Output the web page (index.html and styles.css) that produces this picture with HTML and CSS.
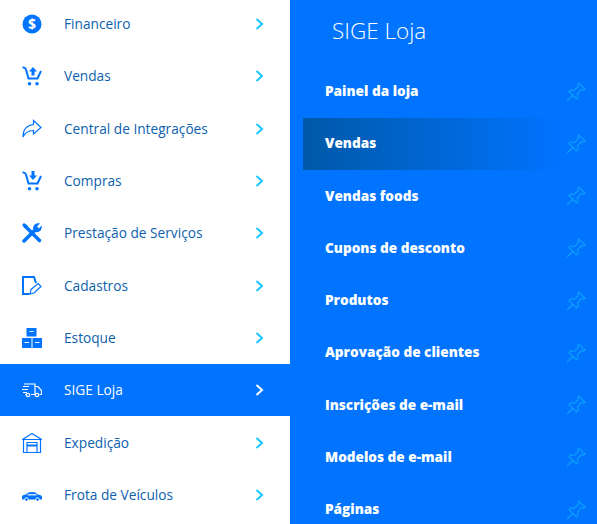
FILE: index.html
```html
<!DOCTYPE html>
<html lang="pt-BR">
<head>
  <meta charset="UTF-8" />
  <title>SIGE Loja</title>
  <link rel="stylesheet" href="styles.css">
</head>
<body>
  <div class="layout">
    <!-- main menu -->
    <ul class="menu">
      <li class="menu-item">
        <svg class="menu-icon" viewBox="0 0 20 20"><circle cx="10" cy="10" r="9.5" fill="currentColor"/><text x="10" y="15" class="dollar">$</text></svg>
        <span class="menu-label">Financeiro</span>
        <svg class="chevron" viewBox="0 0 9 12"><path d="M1.5 1l5.500 5-5.500 5"/></svg>
      </li>
      <li class="menu-item">
        <svg class="menu-icon" viewBox="0 0 20 20"><path class="line" d="M0.500 1.500c2.500-.5 3 .5 3.500 2l2.500 9h9l3.500-7.500"/><path class="solid" d="M11 1l4 4.500h-2.500v4h-3v-4h-2.500z"/><circle class="solid" cx="7.500" cy="17.800" r="1.800"/><circle class="solid" cx="15" cy="17.800" r="1.800"/></svg>
        <span class="menu-label">Vendas</span>
        <svg class="chevron" viewBox="0 0 9 12"><path d="M1.5 1l5.500 5-5.500 5"/></svg>
      </li>
      <li class="menu-item">
        <svg class="menu-icon" viewBox="0 0 20 20"><path class="thin" d="M11.500 1.500l7.500 7-7.500 6.500v-3.500c-4.500 0-8 1-10.500 6.500 0-6.500 3-11.500 10.500-12.500z"/></svg>
        <span class="menu-label">Central de Integrações</span>
        <svg class="chevron" viewBox="0 0 9 12"><path d="M1.5 1l5.500 5-5.500 5"/></svg>
      </li>
      <li class="menu-item">
        <svg class="menu-icon" viewBox="0 0 20 20"><path class="line" d="M0.500 1.500c2.500-.5 3 .5 3.500 2l2.500 9h9l3.500-7.500"/><path class="solid" d="M9.500 0h3v4.500h2.500l-4 4.500-4-4.500h2.500z"/><circle class="solid" cx="7.500" cy="17.800" r="1.800"/><circle class="solid" cx="15" cy="17.800" r="1.800"/></svg>
        <span class="menu-label">Compras</span>
        <svg class="chevron" viewBox="0 0 9 12"><path d="M1.5 1l5.500 5-5.500 5"/></svg>
      </li>
      <li class="menu-item">
        <svg class="menu-icon" viewBox="0 0 20 20"><path class="tool" d="M3 3l14.500 14.500"/><path class="solid" d="M0 2l2-2 4 3v2.500l-1 1z"/><path class="tool" d="M2 18l10-10"/><path class="solid" d="M11 6c0-4 3-6.500 7-5.500l-3 3 2 2 2.500-3c1 4-2 7.500-6 6.500z"/></svg>
        <span class="menu-label">Prestação de Serviços</span>
        <svg class="chevron" viewBox="0 0 9 12"><path d="M1.5 1l5.500 5-5.500 5"/></svg>
      </li>
      <li class="menu-item">
        <svg class="menu-icon" viewBox="0 0 20 20"><path class="line" d="M7.500 18h-6.500v-17h11l2 6"/><path class="thin" d="M9 13.500l7-6 3 3-7 6.500-4 1z"/></svg>
        <span class="menu-label">Cadastros</span>
        <svg class="chevron" viewBox="0 0 9 12"><path d="M1.5 1l5.500 5-5.500 5"/></svg>
      </li>
      <li class="menu-item">
        <svg class="menu-icon" viewBox="0 0 20 20"><path class="solid" d="M4.500 0h10v8.500h-10zM0 10h9.500v10h-9.500zM10.500 10h9.500v10h-9.500z"/><path class="gap" d="M7.500 3.500h4M2.500 14.500h4.500M13 14.500h4.500"/></svg>
        <span class="menu-label">Estoque</span>
        <svg class="chevron" viewBox="0 0 9 12"><path d="M1.5 1l5.500 5-5.500 5"/></svg>
      </li>
      <li class="menu-item active">
        <svg class="menu-icon" viewBox="0 0 20 20"><path class="thin" d="M2 4h11v10.500h-4M13 6.500h3l3.500 4v4h-2M4 14.500h-1M1 6.500h6M0 9.500h6M1 12.500h4"/><circle class="thin" cx="6" cy="15" r="1.700"/><circle class="thin" cx="15" cy="15" r="1.700"/></svg>
        <span class="menu-label">SIGE Loja</span>
        <svg class="chevron" viewBox="0 0 9 12"><path d="M1.5 1l5.500 5-5.500 5"/></svg>
      </li>
      <li class="menu-item">
        <svg class="menu-icon" viewBox="0 0 20 20"><path class="thin" d="M0.500 6.500l9.500-6 9.500 6zM1.500 6.500v13h17v-13"/><path class="thin" d="M5 9.500h10v10h-10z"/><path class="line" d="M5 12.500h10"/></svg>
        <span class="menu-label">Expedição</span>
        <svg class="chevron" viewBox="0 0 9 12"><path d="M1.5 1l5.500 5-5.500 5"/></svg>
      </li>
      <li class="menu-item">
        <svg class="menu-icon" viewBox="0 0 20 20"><path class="solid" d="M0 12c0-1.500 1.500-2.200 4-2.500 1.500-1.800 3.500-2.500 6-2.500s4 .7 5.500 2.500c2.500.2 4.500 1 4.500 2.500v2.500h-20z"/><path class="gap" d="M5.500 9.800h9"/><circle class="wheel" cx="4.500" cy="14.500" r="1.800"/><circle class="wheel" cx="15.500" cy="14.500" r="1.800"/></svg>
        <span class="menu-label">Frota de Veículos</span>
        <svg class="chevron" viewBox="0 0 9 12"><path d="M1.5 1l5.500 5-5.500 5"/></svg>
      </li>
    </ul>

    <!-- submenu of SIGE Loja -->
    <div class="submenu">
      <h2 class="submenu-title">SIGE Loja</h2>
      <ul class="submenu-list">
        <li class="submenu-item"><span class="submenu-label">Painel da loja</span><svg class="pin" viewBox="0 0 20 20"><path d="M1 19l6-6M12.500 1l6.500 6-1.500 1-2-.5-4 4.500.5 3.500-1.500 1.500-7.500-7.500 1.500-1.500 3.500.5 4.500-4-.5-2z"/></svg></li>
        <li class="submenu-item current"><span class="submenu-label">Vendas</span><svg class="pin" viewBox="0 0 20 20"><path d="M1 19l6-6M12.500 1l6.500 6-1.500 1-2-.5-4 4.500.5 3.500-1.500 1.500-7.500-7.500 1.500-1.500 3.500.5 4.500-4-.5-2z"/></svg></li>
        <li class="submenu-item"><span class="submenu-label">Vendas foods</span><svg class="pin" viewBox="0 0 20 20"><path d="M1 19l6-6M12.500 1l6.500 6-1.500 1-2-.5-4 4.500.5 3.500-1.500 1.500-7.500-7.500 1.500-1.500 3.500.5 4.500-4-.5-2z"/></svg></li>
        <li class="submenu-item"><span class="submenu-label">Cupons de desconto</span><svg class="pin" viewBox="0 0 20 20"><path d="M1 19l6-6M12.500 1l6.500 6-1.500 1-2-.5-4 4.500.5 3.500-1.500 1.500-7.500-7.500 1.500-1.500 3.500.5 4.500-4-.5-2z"/></svg></li>
        <li class="submenu-item"><span class="submenu-label">Produtos</span><svg class="pin" viewBox="0 0 20 20"><path d="M1 19l6-6M12.500 1l6.500 6-1.500 1-2-.5-4 4.500.5 3.500-1.500 1.500-7.500-7.500 1.500-1.500 3.500.5 4.500-4-.5-2z"/></svg></li>
        <li class="submenu-item"><span class="submenu-label">Aprovação de clientes</span><svg class="pin" viewBox="0 0 20 20"><path d="M1 19l6-6M12.500 1l6.500 6-1.500 1-2-.5-4 4.500.5 3.500-1.500 1.500-7.500-7.500 1.500-1.500 3.500.5 4.500-4-.5-2z"/></svg></li>
        <li class="submenu-item"><span class="submenu-label">Inscrições de e-mail</span><svg class="pin" viewBox="0 0 20 20"><path d="M1 19l6-6M12.500 1l6.500 6-1.500 1-2-.5-4 4.500.5 3.500-1.500 1.500-7.500-7.500 1.500-1.500 3.500.5 4.500-4-.5-2z"/></svg></li>
        <li class="submenu-item"><span class="submenu-label">Modelos de e-mail</span><svg class="pin" viewBox="0 0 20 20"><path d="M1 19l6-6M12.500 1l6.500 6-1.500 1-2-.5-4 4.500.5 3.500-1.500 1.500-7.500-7.500 1.500-1.500 3.500.5 4.500-4-.5-2z"/></svg></li>
        <li class="submenu-item"><span class="submenu-label">Páginas</span><svg class="pin" viewBox="0 0 20 20"><path d="M1 19l6-6M12.500 1l6.500 6-1.500 1-2-.5-4 4.500.5 3.500-1.500 1.500-7.500-7.500 1.500-1.500 3.500.5 4.500-4-.5-2z"/></svg></li>
      </ul>
    </div>
  </div>
</body>
</html>
```

FILE: styles.css
```css
html, body {
  margin: 0;
  padding: 0;
  height: 524px;
  overflow: hidden;
  background-color: #fff;
  font-family: "Open Sans", Arial, sans-serif;
}

ul {
  list-style: none;
  margin: 0;
  padding: 0;
}

.layout {
  display: flex;
  height: 524px;
}

/* Main menu */
.menu {
  width: 290px;
  flex-shrink: 0;
  margin-top: -2.2px;
}

.menu-item {
  display: flex;
  align-items: center;
  height: 52.33px;
  padding: 0 26px 0 22px;
  box-sizing: border-box;
  color: #0e5fae;
}

.menu-item.active {
  background-color: #0073ff;
  color: #fff;
}

.menu-icon {
  width: 20px;
  height: 20px;
  flex-shrink: 0;
  color: #0073ff;
}

.active .menu-icon {
  color: #fff;
}

.menu-label {
  flex: 1;
  margin-left: 22px;
  padding-bottom: 1px;
  font-size: 13.7px;
}

.chevron {
  width: 9px;
  height: 12px;
  fill: none;
  stroke: #1ac6ff;
  stroke-width: 2;
}

.active .chevron {
  stroke: #fff;
}

/* Icon parts */
.dollar {
  font-family: "Open Sans", Arial, sans-serif;
  font-size: 14px;
  font-weight: 700;
  text-anchor: middle;
  fill: #fff;
}

.solid {
  fill: currentColor;
}

.line {
  fill: none;
  stroke: currentColor;
  stroke-width: 2;
}

.thin {
  fill: none;
  stroke: currentColor;
  stroke-width: 1.2;
}

.tool {
  fill: none;
  stroke: currentColor;
  stroke-width: 3.5;
  stroke-linecap: round;
}

.gap {
  fill: none;
  stroke: #fff;
  stroke-width: 1.2;
}

.wheel {
  fill: #0073ff;
  stroke: #fff;
  stroke-width: 1;
}

/* Submenu */
.submenu {
  flex: 1;
  background-color: #0073ff;
  color: #fff;
  overflow: hidden;
}

.submenu-title {
  margin: 0;
  padding: 15px 0 0 42px;
  height: 50.4px;
  font-size: 22.5px;
  font-weight: 300;
  line-height: 32px;
}

.submenu-item {
  display: flex;
  align-items: center;
  justify-content: space-between;
  height: 52.25px;
  margin-left: 13px;
  padding: 0 11px 0 22px;
}

.submenu-label {
  padding-bottom: 2px;
  font-size: 13.6px;
  font-weight: 800;
}

.submenu-item.current {
  background: linear-gradient(to right, #0059a8, #0073ff 88%);
}

.pin {
  width: 20px;
  height: 20px;
  fill: none;
  stroke: #0a9fff;
  stroke-width: 1.2;
}
```
